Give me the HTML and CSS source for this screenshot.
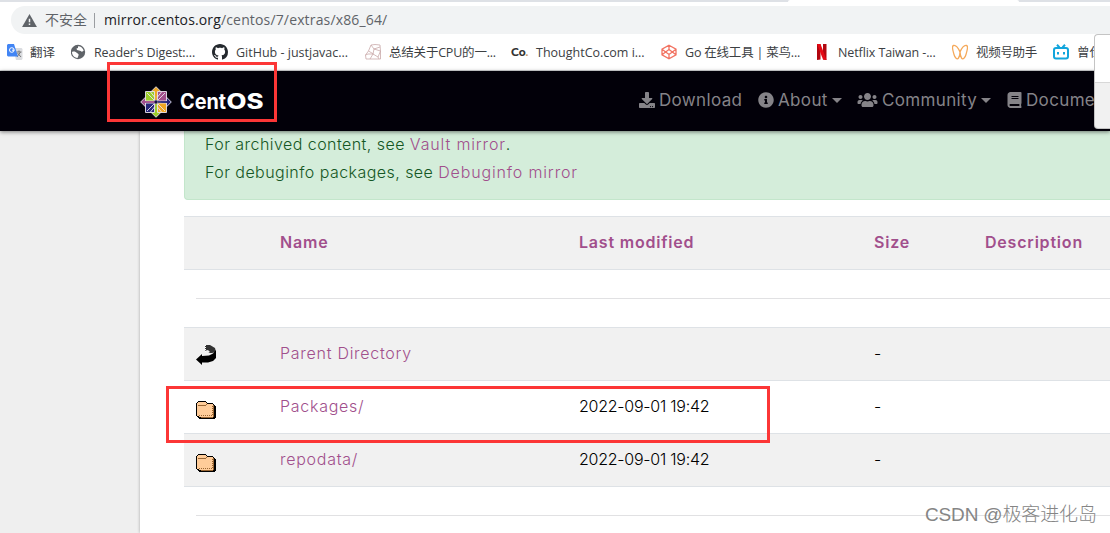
FILE: index.html
```html
<!DOCTYPE html>
<html lang="en">
<head>
<meta charset="UTF-8">
<meta name="viewport" content="width=device-width, initial-scale=1.0">
<title>Index of /centos/7/extras/x86_64</title>
<link rel="stylesheet" href="styles.css">
</head>
<body>

<!-- Browser bar -->
<div class="browser">
    <div class="tabs"><div class="tab-active"></div></div>
    <div class="address">
        <svg class="warn" viewBox="0 0 16 14"><path fill="#5f6368" d="M8 0L16 14H0z"/><path fill="#f1f3f4" d="M7.2 5h1.6v4H7.2zM7.2 10.300h1.600v1.600H7.2z"/></svg>
        <span class="insecure">不安全</span>
        <span class="divider"></span>
        <span class="url"><b>mirror.centos.org</b>/centos/7/extras/x86_64/</span>
    </div>
    <div class="bookmarks">
        <div class="bookmark">
            <svg viewBox="0 0 16 16"><path fill="#dadce0" d="M6 4h8.500l1 1v10l-1 1H9z"/><path fill="none" stroke="#777" d="M9.500 8h5M12 6.500V8M10 13l3.500-5M10.500 9l3.500 4"/><path fill="#4285f4" d="M1 0h6l4 12.500H1l-1-1V1z"/><circle cx="4.800" cy="6" r="2.300" fill="none" stroke="#fff"/><path stroke="#fff" d="M5 6.200h2.300"/></svg>
            <span class="translate">翻译</span>
        </div>
        <div class="bookmark">
            <svg viewBox="0 0 16 16"><circle cx="7" cy="8" r="7.200" fill="#5f6368"/><path fill="#fff" d="M1 8c2-1 4 0 5 1s2 1 1.500 2.500L6.500 14C3 13.500 1 11 1 8zM7 2.200c3 0 5 2 5.700 4.300-1 1.300-2 1.500-3 .5L8 6.500 6 6l-.5-1.500L7 4z"/></svg>
            <span class="reader">Reader's Digest:...</span>
        </div>
        <div class="bookmark">
            <svg viewBox="0 0 16 16"><path fill="#24292e" d="M8 0C3.580 0 0 3.580 0 8c0 3.540 2.290 6.530 5.470 7.590.4.070.55-.17.55-.38 0-.19-.01-.82-.01-1.490-2.010.37-2.530-.49-2.690-.94-.09-.23-.48-.94-.82-1.130-.28-.15-.68-.52-.01-.53.63-.01 1.080.58 1.230.82.72 1.210 1.870.87 2.330.66.070-.52.28-.87.51-1.070-1.780-.2-3.640-.89-3.640-3.950 0-.87.31-1.590.82-2.150-.08-.2-.36-1.020.08-2.120 0 0 .67-.21 2.200.82.64-.18 1.320-.27 2-.27s1.360.09 2 .27c1.530-1.040 2.200-.82 2.200-.82.44 1.100.16 1.920.08 2.120.51.56.82 1.270.82 2.150 0 3.070-1.870 3.750-3.650 3.950.29.25.54.73.54 1.480 0 1.070-.01 1.930-.01 2.200 0 .21.15.46.55.38A8.010 8.010 0 0016 8c0-4.420-3.580-8-8-8z"/></svg>
            <span>GitHub - justjavac...</span>
        </div>
        <div class="bookmark">
            <svg viewBox="0 0 16 16" fill="none" stroke="#c9a9a9" stroke-width=".8"><path d="M6 1l4-.5 5 .5.500 6v8H1L.5 11l3-4zM6 1l3 4 6-2M9 5l-1 5 5 3 2.500-6L9 5M8 10l-5 0-2.500 1M8 10l-3 5M13 13l1 2M3.500 7l5 3"/></svg>
            <span class="cpu">总结关于CPU的一...</span>
        </div>
        <div class="bookmark">
            <span class="co">Co<i>.</i></span>
            <span>ThoughtCo.com i...</span>
        </div>
        <div class="bookmark">
            <svg viewBox="0 0 16 16" fill="none" stroke="#f27362" stroke-width="1.300"><path d="M8 1.200l7 4v5.600l-7 4-7-4V5.200zM8 1.200v4.300L1 10.800M8 5.500l7 5.300M1 5.200l7 5.300 7-5.300M8 10.500v4.300"/></svg>
            <span class="go">Go 在线工具 | 菜鸟...</span>
        </div>
        <div class="bookmark">
            <svg viewBox="0 0 16 16"><path fill="#b1060f" d="M2 0h3.500v15.500L2 16zM8 0h3.500v16L8 15.500z"/><path fill="#e50914" d="M2 0h3.500l6 16L8 15.500z"/></svg>
            <span class="netflix">Netflix Taiwan -...</span>
        </div>
        <div class="bookmark">
            <svg viewBox="0 0 16 16" fill="none" stroke="#f5a95a" stroke-width="1.300"><path d="M8 8C6 3.500 3.500 1 1.500 1.500S1 7 2 10.500s3 5.500 4.500 3.500S8 10 8 8s0 4 1.500 6 3.500 0 4.500-3.500 2.500-8.500.5-9S10 3.500 8 8z"/></svg>
            <span class="channel">视频号助手</span>
        </div>
        <div class="bookmark">
            <svg viewBox="0 0 16 16" fill="none" stroke="#12a5dc" stroke-width="2"><rect x="1" y="4" width="14" height="10.500" rx="2"/><path d="M4 .8l2.500 2.700M12 .8L9.500 3.500M5 8v2.500M11 8v2.500"/></svg>
            <span>曾仕</span>
        </div>
    </div>
</div>

<!-- Site header -->
<div class="header">
    <div class="logo">
        <svg class="logo-mark" viewBox="0 0 32 32">
            <g stroke="#e8e4ee" stroke-width=".9">
                <path fill="#efa724" d="M16 .7l5 5V16H11V5.700z"/>
                <path fill="#262577" d="M31.300 16l-5 5H16V11h10.300z"/>
                <path fill="#9ccd2a" d="M16 31.300l-5-5V16h10v10.300z"/>
                <path fill="#a14f8c" d="M.7 16l5-5H16v10H5.700z"/>
                <path fill="#9ccd2a" d="M5.500 5.500h9V15h-9z"/>
                <path fill="#a14f8c" d="M26.500 5.500h-9V15h9z"/>
                <path fill="#efa724" d="M26.500 26.500h-9V17h9z"/>
                <path fill="#262577" d="M5.500 26.500h9V17h-9z"/>
                <path fill="none" d="M7 7l8 8M25 7l-8 8M25 25l-8-8M7 25l8-8M10.500 6l4 5M21.500 6l-4 5M21.500 26l-4-5M10.500 26l4-5"/>
            </g>
            <path stroke="#efa724" stroke-width="1.600" d="M16 3v11"/>
            <path stroke="#262577" stroke-width="1.600" d="M18 16h11"/>
            <path stroke="#9ccd2a" stroke-width="1.600" d="M16 18v11"/>
            <path stroke="#a14f8c" stroke-width="1.600" d="M3 16h11"/>
            <path fill="#1a1448" d="M14.500 14.500h3v3h-3z"/>
        </svg>
        <svg class="logo-text" viewBox="0 0 90 32">
            <text x="1" y="23" textLength="46" lengthAdjust="spacingAndGlyphs">Cent</text>
            <text class="heavy" x="47.500" y="23" textLength="37" lengthAdjust="spacingAndGlyphs">OS</text>
        </svg>
    </div>
    <div class="nav">
        <a><svg viewBox="0 0 512 512"><path d="M216 0h80c13.300 0 24 10.700 24 24v168h87.700c17.800 0 26.700 21.500 14.100 34.100L269.700 378.300c-7.500 7.500-19.800 7.500-27.300 0L90.100 226.100c-12.600-12.600-3.700-34.100 14.100-34.100H192V24c0-13.300 10.700-24 24-24zm296 376v112c0 13.300-10.700 24-24 24H24c-13.300 0-24-10.700-24-24V376c0-13.300 10.700-24 24-24h146.700l49 49c20.100 20.100 52.500 20.100 72.600 0l49-49H488c13.300 0 24 10.700 24 24zm-124 88c0-11-9-20-20-20s-20 9-20 20 9 20 20 20 20-9 20-20zm64 0c0-11-9-20-20-20s-20 9-20 20 9 20 20 20 20-9 20-20z"/></svg><span>Download</span></a>
        <a><svg viewBox="0 0 512 512"><path d="M256 8C119.043 8 8 119.083 8 256c0 136.997 111.043 248 248 248s248-111.003 248-248C504 119.083 392.957 8 256 8zm0 110c23.196 0 42 18.804 42 42s-18.804 42-42 42-42-18.804-42-42 18.804-42 42-42zm56 254c0 6.627-5.373 12-12 12h-88c-6.627 0-12-5.373-12-12v-24c0-6.627 5.373-12 12-12h12v-64h-12c-6.627 0-12-5.373-12-12v-24c0-6.627 5.373-12 12-12h64c6.627 0 12 5.373 12 12v100h12c6.627 0 12 5.373 12 12v24z"/></svg><span>About</span><i class="caret"></i></a>
        <a><svg class="wide" viewBox="0 0 640 512"><path d="M96 224c35.300 0 64-28.700 64-64s-28.700-64-64-64-64 28.700-64 64 28.700 64 64 64zm448 0c35.300 0 64-28.700 64-64s-28.700-64-64-64-64 28.700-64 64 28.700 64 64 64zm32 32h-64c-17.600 0-33.500 7.100-45.100 18.600 40.300 22.100 68.900 62 75.100 109.400h66c17.700 0 32-14.300 32-32v-32c0-35.300-28.700-64-64-64zm-256 0c61.900 0 112-50.100 112-112S381.900 32 320 32 208 82.100 208 144s50.100 112 112 112zm76.800 32h-8.300c-20.800 10-43.900 16-68.500 16s-47.600-6-68.500-16h-8.300C179.600 288 128 339.600 128 403.200V432c0 26.500 21.500 48 48 48h288c26.500 0 48-21.500 48-48v-28.800c0-63.600-51.600-115.200-115.200-115.200zm-223.700-13.400C161.500 263.100 145.600 256 128 256H64c-35.300 0-64 28.700-64 64v32c0 17.700 14.300 32 32 32h65.900c6.300-47.400 34.900-87.300 75.200-109.400z"/></svg><span>Community</span><i class="caret"></i></a>
        <a><svg class="narrow" viewBox="0 0 448 512"><path d="M448 360V24c0-13.300-10.700-24-24-24H96C43 0 0 43 0 96v320c0 53 43 96 96 96h328c13.300 0 24-10.700 24-24v-16c0-7.500-3.500-14.300-8.900-18.700-4.200-15.400-4.200-59.300 0-74.700 5.400-4.300 8.900-11.100 8.900-18.600zM128 134c0-3.300 2.700-6 6-6h212c3.300 0 6 2.700 6 6v20c0 3.300-2.700 6-6 6H134c-3.300 0-6-2.700-6-6v-20zm0 64c0-3.300 2.700-6 6-6h212c3.300 0 6 2.700 6 6v20c0 3.300-2.700 6-6 6H134c-3.300 0-6-2.700-6-6v-20zm253.400 250H96c-17.700 0-32-14.300-32-32 0-17.600 14.400-32 32-32h285.400c-1.900 17.100-1.900 46.900 0 64z"/></svg><span>Docume</span></a>
    </div>
</div>

<!-- Directory listing -->
<div class="container">
    <div class="alert">
        <div>For archived content, see <a>Vault mirror</a>.</div>
        <div>For debuginfo packages, see <a>Debuginfo mirror</a></div>
    </div>
    <table class="listing">
        <colgroup><col class="c-icon"><col class="c-name"><col class="c-date"><col class="c-size"><col></colgroup>
        <tr class="odd"><th></th><th><a>Name</a></th><th><a>Last modified</a></th><th><a>Size</a></th><th><a>Description</a></th></tr>
        <tr><td class="rule" colspan="5"><hr></td></tr>
        <tr class="odd">
            <td><svg class="icon" viewBox="0 0 20 22"><path fill="#333" d="M9 0h5l5 3 1 4-4 1h-4L9 7z"/><path fill="#f1f1f1" d="M8 6l4-1 2 2-5 3z"/><path stroke="#fff" stroke-dasharray="1 1" d="M9.500 0v7"/><path d="M20 5v8l-3 3-5 1.500H6V20L0 14.500 6 9v2l7-.5 4-2z"/></svg></td>
            <td><a>Parent Directory</a></td><td></td><td>-</td><td></td>
        </tr>
        <tr>
            <td><svg class="icon" viewBox="0 0 20 22"><use href="#folder"/></svg></td>
            <td><a>Packages/</a></td><td class="date">2022-09-01 19:42</td><td>-</td><td></td>
        </tr>
        <tr class="odd">
            <td><svg class="icon" viewBox="0 0 20 22">
                <g id="folder" shape-rendering="crispEdges">
                    <path d="M1 4h1V3h8v1h1v1h6v1h1v1h1v1h1v12h-1v1H3v-1H2v-1H1v-1H0V5h1z"/>
                    <path fill="#fc9" d="M2 4h8v1h1v1h6v13H2v-1H1V5h1z"/>
                    <path fill="#963" d="M2 7h8v1H2zM10 6h1v1h-1zM5 19h12v1H5zM17 7h1v12h-1z"/>
                    <path stroke="#963" stroke-dasharray="1 1" d="M3 17.500h14M16.500 8v10"/>
                    <path d="M17 6h1v1h-1zM1 18h2v1H1z"/>
                </g>
            </svg></td>
            <td><a>repodata/</a></td><td class="date">2022-09-01 19:42</td><td>-</td><td></td>
        </tr>
        <tr><td class="rule" colspan="5"><hr></td></tr>
    </table>
</div>

<!-- Overlays -->
<div class="popup"></div>
<div class="mark mark-logo"></div>
<div class="mark mark-packages"></div>
<div class="watermark">CSDN @极客进化岛</div>

</body>
</html>
```
FILE: styles.css
```css
body {
    margin: 0;
    height: 533px;
    overflow: hidden;
    position: relative;
    background-color: #efefef;
    color: #000;
    font-family: Inter, "Noto Sans CJK SC", sans-serif;
    font-size: 16px;
    font-weight: 300;
    line-height: 28px;
}

a {
    color: #a14f8c;
}

/* Browser bar */
.browser {
    height: 70px;
    background-color: #fff;
    border-bottom: 1px solid #d5d7d9;
    font-family: "Open Sans", "Noto Sans CJK SC", sans-serif;
    font-weight: 400;
}

.tabs {
    height: 2px;
    padding-left: 788px;
    background-color: #dee1e6;
}

.tab-active {
    width: 231px;
    height: 2px;
    background-color: #fff;
    border-radius: 2px 2px 0 0;
}

.address {
    display: flex;
    align-items: center;
    height: 28px;
    margin: 4px 0 0 11px;
    padding-left: 11px;
    background-color: #f1f3f4;
    border-radius: 14px 0 0 14px;
    font-size: 14px;
    color: #5f6368;
}

.warn {
    width: 15px;
    height: 13px;
}

.insecure {
    width: 43px;
    margin-left: 8px;
}

.divider {
    width: 1px;
    height: 15px;
    margin: 0 9px 0 6px;
    background-color: #9a9da1;
}

.url {
    letter-spacing: 0.15px;
}

.url b {
    font-weight: 400;
    color: #202124;
}

.bookmarks {
    display: grid;
    grid-template-columns: 64px 141px 153px 146px 150px 154px 137px 101px 57px;
    height: 36px;
    padding-left: 7px;
}

.bookmark {
    display: flex;
    align-items: center;
    gap: 8px;
    font-size: 12.5px;
    color: #3c4043;
    white-space: nowrap;
}

.bookmark span {
    padding-top: 1px;
}

.bookmark svg {
    width: 16px;
    height: 16px;
    flex: none;
}

.bookmark .translate {
    margin-left: -1px;
}

.bookmark .reader {
    margin-left: -1px;
    letter-spacing: -0.1px;
}

.bookmark .netflix {
    margin-left: -1px;
    letter-spacing: -0.1px;
}

.bookmark .cpu,
.bookmark .go {
    letter-spacing: -0.2px;
}

.bookmark .channel {
    letter-spacing: -0.3px;
}

.bookmark .co {
    width: 17px;
    padding: 0;
    font: 900 12px/16px Lato, sans-serif;
    color: #333;
}

.co i {
    color: #c96;
}

/* Site header */
.header {
    position: relative;
    display: flex;
    align-items: center;
    height: 60px;
    background-color: #020009;
    box-shadow: 0 1px 4px rgba(0, 0, 0, 0.5);
}

.logo {
    display: flex;
    align-items: center;
    flex: none;
    width: 499px;
    padding: 2px 0 0 140px;
}

.logo-mark {
    width: 32px;
    height: 32px;
}

.logo-text {
    width: 90px;
    height: 32px;
    margin-left: 7px;
    fill: #fff;
    font-family: Inter, sans-serif;
    font-size: 21px;
    font-weight: 700;
}

.logo-text .heavy {
    font-weight: 800;
}

.nav {
    display: grid;
    grid-template-columns: 119px 99px 150px 103px;
    padding-bottom: 2px;
    font-size: 17px;
    font-weight: 400;
    letter-spacing: 0.35px;
}

.nav a {
    display: flex;
    align-items: center;
    color: #858388;
}

.nav svg {
    width: 16px;
    height: 16px;
    margin-right: 4px;
    flex: none;
    fill: #858388;
}

.nav svg.wide {
    width: 21px;
}

.nav svg.narrow {
    width: 15px;
}

.caret {
    margin-left: 4px;
    border-top: 5px solid #858388;
    border-left: 5px solid transparent;
    border-right: 5px solid transparent;
}

/* Directory listing */
.container {
    height: 402px;
    margin-left: 140px;
    padding-left: 44px;
    background-color: #fff;
    box-shadow: 0 0 3px rgba(0, 0, 0, 0.3);
    letter-spacing: 0.73px;
}

.alert {
    padding: 0 0 12px 20px;
    border: 1px solid #c3e6cb;
    border-top: none;
    border-right: none;
    border-radius: 0 0 0 4px;
    background-color: #d4edda;
    color: #155724;
    letter-spacing: 0.45px;
}

.alert div {
    height: 28px;
    line-height: 26px;
}

.alert a {
    letter-spacing: 0.85px;
}

.listing {
    width: 926px;
    margin-top: 16px;
    border-collapse: separate;
    border-spacing: 0;
    table-layout: fixed;
}

.c-icon { width: 84px; }
.c-name { width: 299px; }
.c-date { width: 295px; }
.c-size { width: 111px; }

th,
td {
    height: 28px;
    padding: 12px;
    border-top: 1px solid #dee2e6;
    line-height: 26px;
    text-align: left;
    vertical-align: top;
}

th {
    font-weight: 600;
    letter-spacing: 0.8px;
}

.rule {
    padding-right: 0;
}

.date {
    letter-spacing: -0.25px;
}

.odd {
    background-color: #f1f1f1;
}

hr {
    margin: 16px 0;
    border: none;
    border-top: 1px solid #e1e1e3;
}

.icon {
    display: block;
    width: 20px;
    height: 22px;
    margin-top: 5px;
}

/* Overlays */
.popup {
    position: absolute;
    top: 34px;
    left: 1094px;
    width: 16px;
    height: 95px;
    box-sizing: border-box;
    background: linear-gradient(#fff 47px, #d8d8d8 47px, #d8d8d8 48px, #f1f1f1 48px);
    border: 1px solid #c4c4c4;
    border-right: none;
    border-radius: 4px 0 0 4px;
}

.mark {
    position: absolute;
    box-sizing: border-box;
    border: 3px solid #fc3636;
}

.mark-logo {
    top: 62px;
    left: 107px;
    width: 170px;
    height: 60px;
}

.mark-packages {
    top: 386px;
    left: 166px;
    width: 604px;
    height: 57px;
}

.watermark {
    position: absolute;
    top: 501px;
    left: 925px;
    font-family: "Liberation Sans", "Noto Sans CJK SC", sans-serif;
    font-size: 19px;
    letter-spacing: -0.15px;
    color: #858585;
    white-space: nowrap;
}
```
